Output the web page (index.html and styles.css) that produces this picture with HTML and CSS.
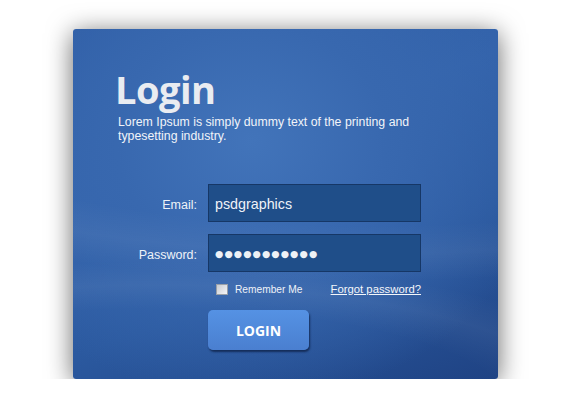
FILE: index.html
```html
<!DOCTYPE html>
<html>
<head>
<meta charset="utf-8">
<link rel="stylesheet" href="styles.css">
</head>
<body>
<div class="card">
  <div class="head">
    <h1 class="title">Login</h1>
    <p class="intro">Lorem Ipsum is simply dummy text of the printing and<br>typesetting industry.</p>
  </div>
  <div class="form">
    <div class="label">Email:</div>
    <div class="field">psdgraphics</div>
    <div class="label">Password:</div>
    <div class="field"><span class="dots">●●●●●●●●●●●</span></div>
    <div class="options">
      <span class="check"><span class="box"></span>Remember Me</span>
      <a class="forgot" href="#">Forgot password?</a>
    </div>
    <div class="actions"><span class="btn">LOGIN</span></div>
  </div>
</div>
</body>
</html>
```
FILE: styles.css
```css
html, body { margin: 0; padding: 0; background: #ffffff; }
body { font-family: "Liberation Sans", Arial, sans-serif; }
.card {
  margin: 29px 0 0 73px;
  width: 425px;
  height: 350px;
  box-sizing: border-box;
  border-radius: 3px;
  padding-top: 41px;
  box-shadow: 0 4px 26px rgba(0,0,0,0.6);
  background:
    radial-gradient(ellipse 520px 160px at 20% 112%, rgba(255,255,255,0) 70%, rgba(255,255,255,0.05) 85%, rgba(255,255,255,0) 100%),
    radial-gradient(ellipse 700px 200px at 70% 15%, rgba(255,255,255,0) 72%, rgba(255,255,255,0.05) 86%, rgba(255,255,255,0) 100%),
    radial-gradient(ellipse 300px 260px at 42% 32%, #4274ba 0%, #3868af 45%, rgba(53,100,170,0) 100%),
    linear-gradient(160deg, #2d5ba3 0%, #3363ab 35%, #2b599f 65%, #1f4384 100%);
}
.head { padding-left: 42px; }
.title {
  margin: 0;
  font-family: "Open Sans", sans-serif;
  font-weight: 700;
  font-size: 38px;
  line-height: 38px;
  color: #e9ecf1;
  letter-spacing: -0.5px;
}
.intro {
  margin: 7px 0 0 3px;
  font-size: 12.3px;
  line-height: 14px;
  color: #f1f4f9;
}
.form {
  margin-top: 41px;
  display: grid;
  grid-template-columns: 124px 213px;
  column-gap: 11px;
  row-gap: 12px;
}
.label {
  text-align: right;
  font-size: 12.5px;
  line-height: 14px;
  color: #eef2f8;
  align-self: center;
  padding-top: 3px;
}
.field {
  height: 38px;
  box-sizing: border-box;
  background: #1f4e89;
  border: 1px solid #163766;
  color: #eef2f8;
  font-size: 14.3px;
  padding: 1px 0 0 6px;
  display: flex;
  align-items: center;
}
.dots {
  font-family: "DejaVu Sans", sans-serif;
  font-size: 9.5px;
  letter-spacing: 1.1px;
  color: #eef1f6;
}
.options {
  grid-column: 2;
  margin-top: -1px;
  display: flex;
  justify-content: space-between;
  align-items: center;
  padding-left: 8px;
}
.check {
  display: flex;
  align-items: center;
  font-size: 10.2px;
  color: #eef2f8;
}
.box {
  width: 10px;
  height: 9px;
  border: 1px solid #9aa0a8;
  background: linear-gradient(135deg, #c9ccd1, #f4f5f7);
  margin-right: 7px;
}
.forgot {
  font-size: 11.3px;
  color: #f3f6fa;
  text-decoration: underline;
}
.actions {
  grid-column: 2;
  margin-top: 3px;
}
.btn {
  display: flex;
  align-items: center;
  justify-content: center;
  width: 101px;
  height: 40px;
  box-sizing: border-box;
  border-radius: 5px;
  background: linear-gradient(#5592e4, #4a7fd0);
  box-shadow: 1px 2px 2px rgba(10,25,60,0.7);
  font-family: "Open Sans", sans-serif;
  font-weight: 700;
  font-size: 14px;
  color: #ffffff;
}
```
